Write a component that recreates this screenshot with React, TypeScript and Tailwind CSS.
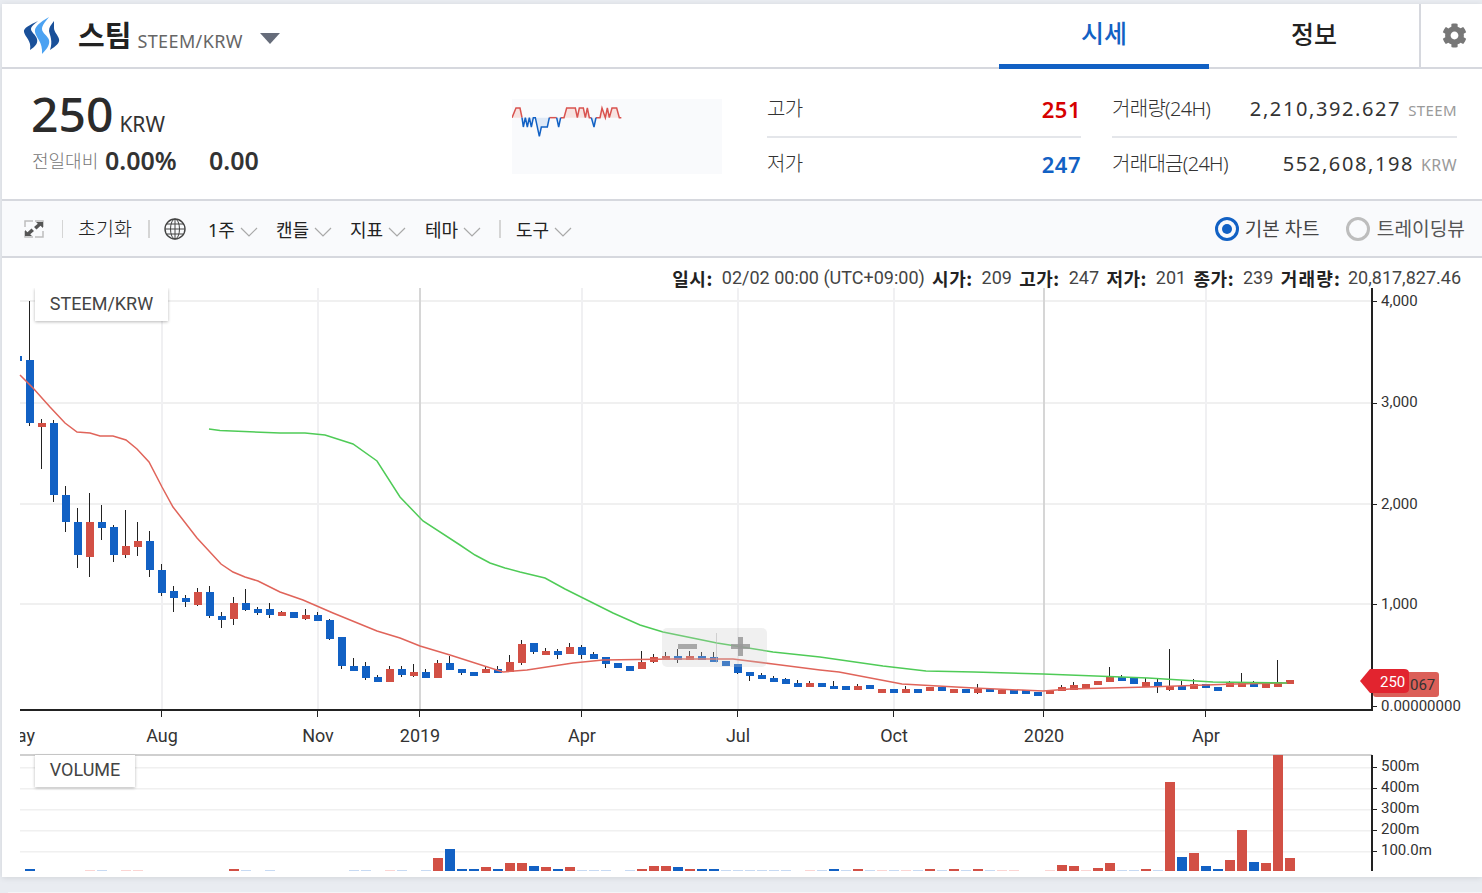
import { FaCog } from "react-icons/fa";

const BLUE = "#1261c4";
const RED = "#d25045";
const candles: [string, number, number, number?, number?][] = [
  ["b",360,423,301,426],["r",423,427,419,469],["b",423,495,420,502],["b",495,522,486,532],["b",522,555,508,568],
  ["r",522,557,493,577],["b",522,528,505,540],["b",527,555,525,562],["r",546,555,510,558],["r",541,547,522,556],
  ["b",541,570,531,577],["b",570,593,564,596],["b",591,598,586,612],["b",598,602,595,607],["r",592,605,588,606],
  ["b",592,616,586,618],["b",616,620,612,628],["r",603,619,597,625],["b",603,610,589,611],["b",609,613,607,615],
  ["b",609,615,603,618],["r",612,616,611,616],["b",612,618],["r",615,619,609,620],["b",615,621,612,621],
  ["b",620,639,619,640],["b",637,666,637,669],["b",666,671,658,671],["b",666,678,662,680],["b",677,682,675,682],
  ["r",669,682,666,682],["b",669,675,666,677],["r",672,676,664,677],["b",672,678,669,678],["r",663,678,660,678],
  ["b",663,670,656,670],["b",669,673,669,675],["b",672,676],["r",669,673,667,673],["b",669,673,666,673],
  ["r",662,672,655,672],["r",644,663,640,665],["b",643,652,643,654],["r",651,655,648,655],["b",651,655,649,659],
  ["r",647,654,643,654],["b",647,655,645,659],["b",654,659,652,659],["b",657,664,657,668],["b",663,668],
  ["b",666,671],["r",662,669,651,669],["r",657,662,654,663],["r",656,660,652,660],["b",656,660,649,663],
  ["r",656,660,651,660],["b",656,660,652,660],["b",657,662,652,662],["b",661,666],["b",664,673,664,674],
  ["b",672,676,672,681],["b",675,679,673,679],["b",678,682,676,682],["b",679,684,678,684],["b",683,687,680,687],
  ["r",683,687,681,687],["b",683,687],["b",686,689,681,689],["b",686,690],["r",686,690,684,690],
  ["b",685,689],["r",689,693],["b",689,693],["r",689,693,686,693],["b",689,693],
  ["r",687,691],["b",687,691],["r",689,693],["b",689,693],["r",689,693,684,694],
  ["b",689,692],["r",690,694],["b",690,694],["b",690,694],["b",692,696],
  ["r",690,694],["r",687,691,685,691],["r",685,690,682,690],["r",684,688],["r",681,685],
  ["r",677,682,667,682],["b",677,681,675,681],["b",678,684],["r",682,687,678,687],["b",682,687,679,693],
  ["r",686,690,649,691],["b",686,690,681,690],["r",684,689,679,689],["b",684,688],["b",687,691],
  ["r",682,687,681,687],["r",682,687,673,687],["b",682,687,681,687],["r",684,688],["r",682,687,660,687],["r",680,684],
];

const redLine = "20,375 33,388 50,407 65,423 77,432 90,433 100,436 113,436 126,440 137,449 149,462 162,487 173,507 197,538 221,564 233,572 245,577 258,581 280,592 303,600 333,613 377,631 400,638 420,646 450,655 503,672 527,670 573,663 603,660 673,659 733,659 773,664 820,670 839,672 902,684 974,688 1043,691 1070,689 1148,687 1235,684 1287,683";
const greenLine = "209,429 220,430.5 280,433 305,433 325,435 353,444 377,461 400,497 423,521 460,545 475,555 490,563 505,568 520,572 545,578 565,589 587,600 613,613 640,625 663,632 717,643 773,652 820,657 883,666 926,671 974,672 1043,674 1148,678 1213,682 1287,683";

const P = "p", Q = "q";
const vols: [number, string, number?][] = [
  [30,"b",869],[90,Q],[102,P],[126,Q],[138,Q],[234,"r",869],[246,P],[270,P],[354,P],[366,P],[390,Q],[402,P],[426,P],
  [438,"r",858],[450,"b",849],[462,"b",869],[474,"b",869],[486,"r",867],[498,"b",869],[510,"r",863],[522,"r",863],
  [534,"b",866],[546,"r",867],[558,"b",869],[570,"r",867],[582,P],[594,P],[606,P],[630,P],[642,"r",869],[654,"r",866],
  [666,"r",866],[678,"b",867],[690,"r",869],[702,"b",869],[714,"b",869],[726,P],[738,P],[750,P],[762,P],[774,P],[786,P],
  [810,Q],[822,P],[834,"b",869],[846,P],[858,"r",869],[870,P],[882,Q],[894,P],[906,Q],[918,P],[930,"r",869],[942,P],
  [954,"r",869],[966,P],[978,"r",869],[990,P],[1002,Q],[1014,Q],[1050,Q],[1062,"r",865],[1074,"r",866],[1086,Q],
  [1098,"r",868],[1110,"r",863],[1122,P],[1134,P],[1146,"r",869],[1158,P],[1170,"r",782],[1182,"b",857],[1194,"r",853],
  [1206,"b",866],[1218,"b",869],[1230,"r",860],[1242,"r",830],[1254,"b",862],[1266,"r",863],[1278,"r",755],[1290,"r",858],
];

const months: [number, string, boolean][] = [
  [162,"Aug",false],[318,"Nov",false],[420,"2019",true],[582,"Apr",false],[738,"Jul",false],[894,"Oct",false],[1044,"2020",true],[1206,"Apr",false],
];

function Chevron() {
  return (
    <svg width="18" height="10" viewBox="0 0 18 10" className="mt-1">
      <polyline points="1,1 9,9 17,1" fill="none" stroke="#a9a9a9" strokeWidth="1.2" />
    </svg>
  );
}

function Logo() {
  return (
    <svg width="38" height="38" viewBox="0 0 38 38" className="shrink-0">
      <path d="M15 4 C7 8 0 11 1 15 C2 20 9 24 7 33 C13 29 15 26 14 22 C13 18 8 15 8 12 C8 9 12 7 15 4Z" fill="#1a5099" />
      <path d="M31 4 C28 8 26 10 26 14 C27 19 30 24 27 33 C33 29 37 26 36 22 C35 18 31 15 31 11 C31 8 31 6 31 4Z" fill="#1a5099" />
      <path d="M26 0 C17 5 11 10 12 15 C13 21 20 25 19 37 C25 31 27 27 26 23 C25 19 19 16 19 12 C19 8 23 4 26 0Z" fill="#4ba2f2" />
    </svg>
  );
}

function Globe() {
  return (
    <svg width="22" height="22" viewBox="0 0 22 22" fill="none" stroke="#444" strokeWidth="1">
      <circle cx="11" cy="11" r="10" strokeWidth="1.4" />
      <ellipse cx="11" cy="11" rx="4.5" ry="10" />
      <line x1="11" y1="1" x2="11" y2="21" />
      <line x1="1" y1="11" x2="21" y2="11" />
      <line x1="2.5" y1="6" x2="19.5" y2="6" />
      <line x1="2.5" y1="16" x2="19.5" y2="16" />
    </svg>
  );
}

function Expand() {
  return (
    <svg width="20" height="18" viewBox="0 0 20 18" fill="none">
      <path d="M1 7V1H9M19 11V17H11" stroke="#bdbdbd" strokeWidth="1.5" />
      <path d="M11 1H19V7M9 17H1V11" stroke="#bdbdbd" strokeWidth="1.5" />
      <path d="M12 2H19V8L16.5 5.7L12.5 9.5L10 7L13.8 3.8Z" fill="#555" />
      <path d="M8 16H1V10L3.5 12.3L7.5 8.5L10 11L6.2 14.2Z" fill="#555" />
    </svg>
  );
}

function Spark() {
  const red = [
    "36,353 48,324 60,324 66,353",
    "148,353 170,353",
    "182,353 192,353 200,324 226,324 232,353 238,324 250,324 256,353 262,324 268,353 274,353",
    "288,353 300,353 306,324 316,353 322,324 328,353 336,324 350,324 358,353 364,353",
  ];
  const blue = [
    "66,353 70,381 76,353 82,381 88,353 94,381 100,353 106,353 118,409 124,381 142,381 148,353",
    "170,353 176,381 182,353",
    "274,353 282,381 288,353",
  ];
  return (
    <svg width="210" height="75" viewBox="36 297 630 225" className="bg-[#f9fafc]">
      {red.map((p, i) => (
        <g key={i}>
          <polygon points={p} fill="#f7e3e1" />
          <polyline points={p} fill="none" stroke="#d9534f" strokeWidth="4.5" />
        </g>
      ))}
      {blue.map((p, i) => (
        <g key={i}>
          <polygon points={p} fill="#dfe9f6" />
          <polyline points={p} fill="none" stroke={BLUE} strokeWidth="4.5" />
        </g>
      ))}
    </svg>
  );
}

function Chart() {
  const axis = "#222";
  const grid = "#f0f0f0";
  const yTicks: [number, string, number][] = [[301,"4,000",306],[403,"3,000",407],[504,"2,000",509],[604,"1,000",609]];
  const vTicks: [number, string, number][] = [[767,"500m",771],[788,"400m",792],[809,"300m",813],[830,"200m",834],[851,"100.0m",855]];
  return (
    <svg width="1480" height="589" viewBox="2 288 1480 589" className="block" fontFamily="Roboto, sans-serif" fill="#333">
      <defs>
        <clipPath id="plot"><rect x="20" y="288" width="1352" height="600" /></clipPath>
      </defs>
      {yTicks.map(([y]) => <rect key={y} x="20" y={y - 1} width="1352" height="2" fill={grid} />)}
      {months.map(([x, , dark]) => (
        <rect key={x} x={x - 1} y="288" width="2" height="422" fill={dark ? "#d6d6d6" : "#f0f0f2"} />
      ))}
      {candles.map(([c, t, b, wt, wb], i) => {
        const x = 30 + 12 * i;
        return (
          <g key={i}>
            {wt !== undefined && <rect x={x - 1} y={wt} width="1" height={(wb as number) - wt} fill="#222" />}
            <rect x={x - 4} y={t} width="8" height={b - t} fill={c === "b" ? BLUE : RED} />
          </g>
        );
      })}
      <rect x="20" y="356" width="2" height="5" fill={BLUE} />
      <polyline points={redLine} fill="none" stroke="#e0645a" strokeWidth="1.5" />
      <polyline points={greenLine} fill="none" stroke="#4fcb57" strokeWidth="1.5" />

      <g>
        <rect x="662" y="628" width="105" height="39" rx="5" fill="#c8c8c8" fillOpacity="0.28" />
        <rect x="716" y="633" width="1" height="30" fill="#bbb" fillOpacity="0.6" />
        <rect x="678" y="644" width="19" height="5" fill="#a8a8a8" />
        <rect x="731" y="644" width="19" height="5" fill="#999" fillOpacity="0.85" />
        <rect x="738" y="637" width="5" height="19" fill="#999" fillOpacity="0.85" />
      </g>

      <rect x="20" y="709" width="1352" height="2" fill={axis} />
      <rect x="1371" y="288" width="2" height="423" fill={axis} />
      {months.map(([x]) => <rect key={x} x={x - 1} y="711" width="1" height="6" fill={axis} />)}
      {yTicks.map(([y]) => <rect key={y} x="1373" y={y} width="4" height="1" fill={axis} />)}
      <rect x="1373" y="706" width="4" height="1" fill={axis} />
      {yTicks.map(([y, t, b]) => <text key={y} x="1381" y={b} fontSize="15">{t}</text>)}
      <text x="1381" y="711" fontSize="15">0.00000000</text>

      <g fontSize="18" textAnchor="middle" fill="#333" clipPath="url(#plot)">
        <text x="18" y="742">May</text>
        {months.map(([x, t]) => <text key={x} x={x} y="742">{t}</text>)}
      </g>

      <rect x="1373" y="672" width="66" height="25" rx="3" fill="#db5f58" />
      <text x="1410" y="690" fontSize="15" fill="#333">067</text>
      <path d="M1360 681 L1370 669 H1404 Q1409 669 1409 673 V689 Q1409 693 1404 693 H1370 Z" fill="#e2242f" />
      <text x="1380" y="687" fontSize="15" fill="#fff">250</text>

      <rect x="20" y="754" width="1352" height="2" fill="#cfcfcf" />
      {vTicks.map(([y]) => <rect key={y} x="20" y={y} width="1352" height="1.5" fill={grid} />)}
      {vols.map(([x, k, top]) => {
        const fill = k === "b" ? BLUE : k === "r" ? RED : k === "p" ? "#c7daf3" : "#fbd5d3";
        const t = top ?? 870;
        return <rect key={x} x={x - 5} y={t} width="10" height={871 - t} fill={fill} />;
      })}
      <rect x="1371" y="755" width="2" height="116" fill={axis} />
      {vTicks.map(([y]) => <rect key={y} x="1373" y={y} width="4" height="1" fill={axis} />)}
      {vTicks.map(([y, t, b]) => <text key={y} x="1381" y={b} fontSize="15">{t}</text>)}
    </svg>
  );
}

function Stat({ label, value, unit, color, light }: { label: string; value: string; unit?: string; color?: string; light?: boolean }) {
  return (
    <div className="flex items-center justify-between h-full">
      <span className="text-[20px] font-light text-[#333] tracking-[-0.7px]">{label}</span>
      <span className="flex items-baseline gap-[7px]">
        <span className={light ? "text-[20px] text-[#333] tracking-[1.6px]" : "text-[22px] font-semibold tracking-[0.5px]"} style={color ? { color } : undefined}>{value}</span>
        {unit && <span className={unit === "KRW" ? "text-[16px] text-[#9a9a9a] tracking-[0.4px]" : "text-[15px] text-[#9a9a9a] tracking-[0.4px]"}>{unit}</span>}
      </span>
    </div>
  );
}

export default function App() {
  const info: [string, string][] = [["일시:", "02/02 00:00 (UTC+09:00)"],["시가:", "209"],["고가:", "247"],["저가:", "201"],["종가:", "239"],["거래량:", "20,817,827.46"]];
  const tools: [string, string][] = [["1주","w-[68px]"],["캔들","w-[74px]"],["지표","w-[75px]"],["테마","w-[74px]"]];
  return (
    <div className="w-[1482px] h-[893px] overflow-hidden bg-[#e9ecf1] flex flex-col pt-1 font-[family-name:'Noto_Sans','Noto_Sans_CJK_KR',sans-serif] text-[#333]">
      <div className="ml-[2px] bg-white flex flex-col h-[873px] shadow-[0_1px_6px_rgba(0,0,0,0.1)]">
        <header className="h-[65px] shrink-0 border-b-2 border-[#d6d8de] flex items-stretch">
          <div className="flex items-center pl-[21px] flex-1">
            <Logo />
            <span className="ml-[17px] text-[29px] font-bold text-[#222] leading-none">스팀</span>
            <span className="ml-[6px] text-[18px] tracking-[0.4px] text-[#666] mt-[11px]">STEEM/KRW</span>
            <span className="ml-[17px] mt-[5px] w-0 h-0 border-x-[10px] border-x-transparent border-t-[11px] border-t-[#666c7a]" />
          </div>
          <div className="w-[210px] -mb-[2px] border-b-[5px] border-[#1261c4] flex justify-center items-center text-[25px] font-medium text-[#1261c4]">시세</div>
          <div className="w-[210px] flex justify-center items-center pb-[2px] text-[25px] font-medium text-[#222]">정보</div>
          <div className="w-[63px] border-l-2 border-[#d6d8de] flex items-center justify-center pl-[5px]"><FaCog size={25} color="#777" /></div>
        </header>

        <section className="h-[132px] shrink-0 border-b-2 border-[#d6d8de] flex">
          <div className="w-[510px] pl-[30px] pt-[11px] shrink-0">
            <div className="flex items-baseline leading-none">
              <span className="-ml-[1px] text-[48px] font-medium text-[#2b2b2b] leading-[68px]">250</span>
              <span className="ml-[6px] text-[21px] text-[#333]">KRW</span>
            </div>
            <div className="flex items-center leading-none">
              <span className="text-[18px] text-[#777] font-light w-[73px]">전일대비</span>
              <span className="text-[25px] font-semibold w-[104px]">0.00%</span>
              <span className="text-[25px] font-semibold">0.00</span>
            </div>
          </div>
          <div className="w-[255px] pt-[30px] shrink-0"><Spark /></div>
          <div className="w-[314px] shrink-0 pt-[13px]">
            <div className="h-[56px] border-b-2 border-[#e4e6ea]"><Stat label="고가" value="251" color="#d60000" /></div>
            <div className="h-[52px]"><Stat label="저가" value="247" color="#1261c4" /></div>
          </div>
          <div className="ml-[31px] w-[345px] shrink-0 pt-[13px]">
            <div className="h-[56px] border-b-2 border-[#e4e6ea]"><Stat label="거래량(24H)" value="2,210,392.627" unit="STEEM" light /></div>
            <div className="h-[52px]"><Stat label="거래대금(24H)" value="552,608,198" unit="KRW" light /></div>
          </div>
        </section>

        <nav className="h-[57px] shrink-0 border-b-2 border-[#d6d8de] bg-[#f9fafc] flex items-center text-[18px] text-[#222]">
          <div className="ml-[22px] w-[38px] flex"><Expand /></div>
          <span className="w-[1px] h-[18px] bg-[#d5d5d5]" />
          <span className="ml-[15px] w-[70px] font-light leading-none text-[19.5px]">초기화</span>
          <span className="w-[2px] h-[18px] bg-[#d5d5d5]" />
          <span className="ml-[14px] w-[44px] flex"><Globe /></span>
          {tools.map(([t, w]) => (
            <span key={t} className={`${w} flex items-center gap-[5px] leading-none pt-[2px]`}>{t}<Chevron /></span>
          ))}
          <span className="w-[2px] h-[18px] bg-[#d5d5d5]" />
          <span className="ml-[15px] flex items-center gap-[5px] leading-none pt-[2px]">도구<Chevron /></span>
          <div className="ml-auto mr-[17px] flex items-center text-[#444] leading-none">
            <span className="w-[24px] h-[24px] rounded-full border-[3px] border-[#1261c4] flex items-center justify-center"><span className="w-[10px] h-[10px] rounded-full bg-[#1261c4]" /></span>
            <span className="ml-[6px] w-[101px] text-[19px] pt-[1px]">기본 차트</span>
            <span className="w-[24px] h-[24px] rounded-full border-[3px] border-[#bdbdbd]" />
            <span className="ml-[7px] text-[19.2px] text-[#555] pt-[1px]">트레이딩뷰</span>
          </div>
        </nav>

        <div className="h-[30px] shrink-0 flex items-center justify-end gap-[7.3px] pr-[21px] font-[family-name:Roboto,'Noto_Sans_CJK_KR',sans-serif] text-[18px] text-[#444] pt-[9px]">
          {info.map(([k, v]) => (
            <span key={k} className={k.length === 4 ? "flex gap-[7px] leading-none" : "flex gap-[9px] leading-none"}><b className={k.length === 4 ? "font-bold tracking-[1.2px] text-[#222] font-[family-name:'Noto_Sans_CJK_KR',sans-serif]" : "font-bold tracking-[0.5px] text-[#222] font-[family-name:'Noto_Sans_CJK_KR',sans-serif]"}>{k}</b>{v}</span>
          ))}
        </div>

        <div className="relative flex-1 overflow-hidden font-[family-name:Roboto,sans-serif]">
          <Chart />
          <div className="absolute left-[33px] top-0 w-[133px] h-[33px] pb-[2px] bg-white shadow-[0_1px_3px_rgba(0,0,0,0.28)] flex items-center justify-center text-[18px] text-[#444]">STEEM/KRW</div>
          <div className="absolute left-[33px] top-[467px] w-[100px] h-[32px] pb-[4px] bg-white shadow-[0_1px_3px_rgba(0,0,0,0.28)] flex items-center justify-center text-[18px] text-[#444]">VOLUME</div>
        </div>
      </div>
      <div className="mt-auto ml-[8px] h-[1px] w-[1474px] bg-[#f4f5f7]" />
    </div>
  );
}
